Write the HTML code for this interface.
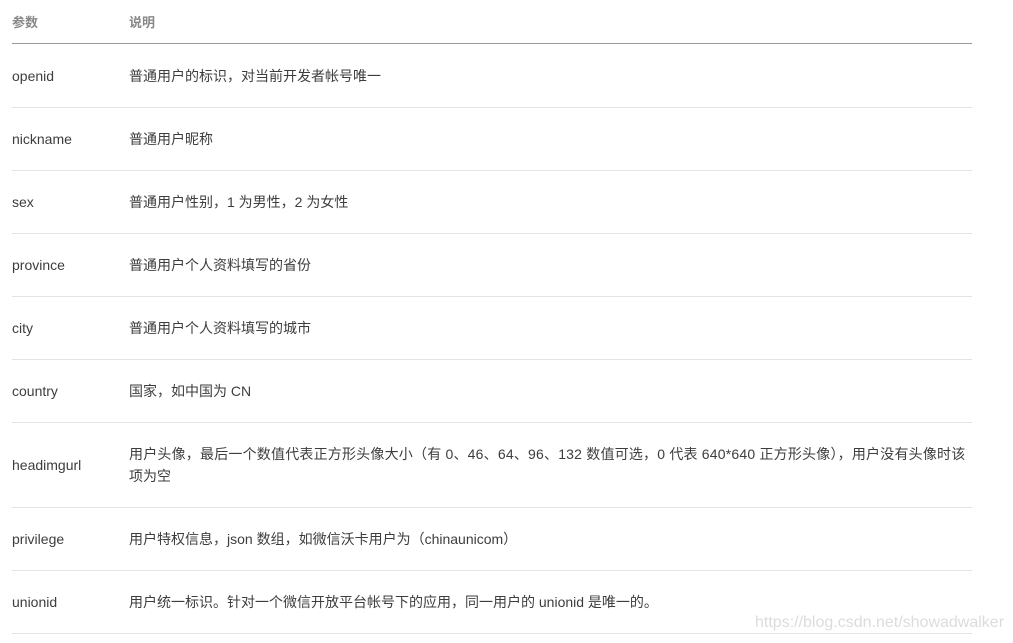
<!DOCTYPE html>
<html><head><meta charset="utf-8"><style>
body{margin:0;width:1013px;height:643px;background:#fff;overflow:hidden;position:relative;font-family:"Liberation Sans","Noto Sans CJK SC",sans-serif;color:#3d3d3d;font-size:14px}
.l{position:absolute;left:12px;width:960px;height:1px;background:#e4e4e4}
.t{position:absolute;white-space:nowrap;line-height:22px}
.h{font-weight:bold;color:#888;font-size:13px}
.wm{position:absolute;left:755px;top:614px;font-size:16px;color:#dcdcdc;font-family:"Liberation Sans",sans-serif}
</style></head><body>
<div class="t h" style="left:12px;top:12px">参数</div>
<div class="t h" style="left:129px;top:12px">说明</div>
<div class="l" style="top:43px;height:1px;background:#999"></div>

<div class="t" style="left:12px;top:65px">openid</div><div class="t" style="left:129px;top:65px">普通用户的标识，对当前开发者帐号唯一</div>
<div class="l" style="top:107px"></div>
<div class="t" style="left:12px;top:128px">nickname</div><div class="t" style="left:129px;top:128px">普通用户昵称</div>
<div class="l" style="top:170px"></div>
<div class="t" style="left:12px;top:191px">sex</div><div class="t" style="left:129px;top:191px">普通用户性别，1 为男性，2 为女性</div>
<div class="l" style="top:233px"></div>
<div class="t" style="left:12px;top:254px">province</div><div class="t" style="left:129px;top:254px">普通用户个人资料填写的省份</div>
<div class="l" style="top:296px"></div>
<div class="t" style="left:12px;top:317px">city</div><div class="t" style="left:129px;top:317px">普通用户个人资料填写的城市</div>
<div class="l" style="top:359px"></div>
<div class="t" style="left:12px;top:380px">country</div><div class="t" style="left:129px;top:380px">国家，如中国为 CN</div>
<div class="l" style="top:422px"></div>
<div class="t" style="left:12px;top:454px">headimgurl</div>
<div class="t" style="left:129px;top:443px;letter-spacing:0.2px">用户头像，最后一个数值代表正方形头像大小（有 0、46、64、96、132 数值可选，0 代表 640*640 正方形头像），用户没有头像时该</div>
<div class="t" style="left:129px;top:465px">项为空</div>
<div class="l" style="top:507px"></div>
<div class="t" style="left:12px;top:528px">privilege</div><div class="t" style="left:129px;top:528px">用户特权信息，json 数组，如微信沃卡用户为（chinaunicom）</div>
<div class="l" style="top:570px"></div>
<div class="t" style="left:12px;top:591px">unionid</div><div class="t" style="left:129px;top:591px">用户统一标识。针对一个微信开放平台帐号下的应用，同一用户的 unionid 是唯一的。</div>
<div class="l" style="top:633px"></div>
<div class="wm">https://blog.csdn.net/showadwalker</div>
</body></html>
